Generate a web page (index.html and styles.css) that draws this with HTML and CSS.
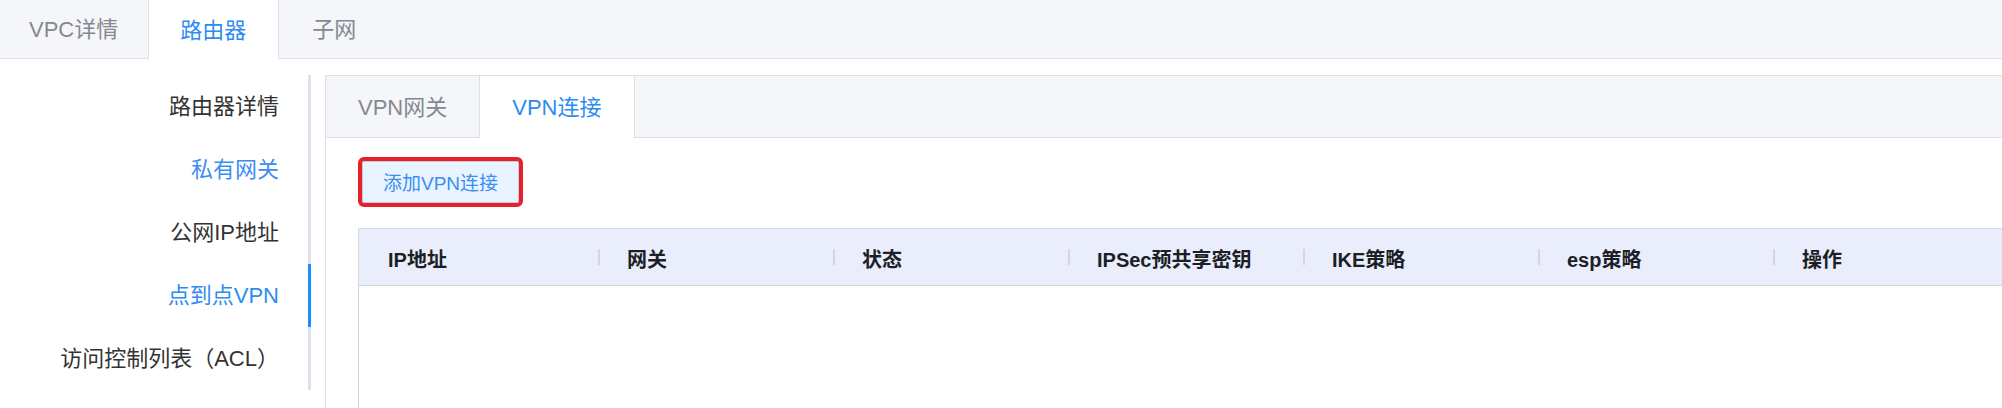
FILE: index.html
```html
<!DOCTYPE html>
<html lang="zh-CN">
<head>
<meta charset="utf-8">
<title>路由器</title>
<link rel="stylesheet" href="styles.css">
</head>
<body>
<div class="top-tabs">
  <div class="top-tab">VPC详情</div>
  <div class="top-tab active">路由器</div>
  <div class="top-tab last">子网</div>
</div>
<div class="main">
  <ul class="side-menu">
    <li class="menu-item">路由器详情</li>
    <li class="menu-item hover">私有网关</li>
    <li class="menu-item">公网IP地址</li>
    <li class="menu-item active">点到点VPN</li>
    <li class="menu-item">访问控制列表（ACL）</li>
  </ul>
  <div class="panel">
    <div class="sub-tabs">
      <div class="sub-tab">VPN网关</div>
      <div class="sub-tab active">VPN连接</div>
    </div>
    <div class="panel-body">
      <button class="btn-add" type="button">添加VPN连接</button>
      <div class="table">
        <div class="thead">
          <div class="th">IP地址</div>
          <div class="th sep">网关</div>
          <div class="th sep">状态</div>
          <div class="th sep">IPSec预共享密钥</div>
          <div class="th sep">IKE策略</div>
          <div class="th sep">esp策略</div>
          <div class="th sep">操作</div>
        </div>
        <div class="tbody"></div>
      </div>
    </div>
  </div>
</div>
</body>
</html>
```

FILE: styles.css
```css
* { box-sizing: border-box; }
html, body {
  margin: 0;
  padding: 0;
  width: 2002px;
  height: 408px;
  overflow: hidden;
  background: #ffffff;
  font-family: "Liberation Sans", "Noto Sans CJK SC", sans-serif;
}

.top-tabs {
  display: flex;
  height: 59px;
  background: #f5f6fa;
  border-bottom: 1px solid #dfe1e8;
}
.top-tab {
  display: flex;
  align-items: center;
  padding: 0 30px 4px 29px;
  font-size: 22px;
  color: #85888f;
  border-right: 1px solid #dfe1e8;
}
.top-tab.active {
  background: #ffffff;
  color: #2d8cf0;
  height: 59px;
  margin-bottom: -1px;
  padding: 0 32px 4px 31px;
}
.top-tab.last {
  border-right: none;
  padding-left: 33px;
}

.main {
  display: flex;
  align-items: flex-start;
  padding-top: 16px;
}

.side-menu {
  list-style: none;
  margin: 0;
  padding: 0;
  width: 311px;
  flex: none;
}
.menu-item {
  height: 63px;
  display: flex;
  align-items: center;
  justify-content: flex-end;
  padding: 0 29px 5px 0;
  font-size: 22px;
  color: #333333;
  border-right: 3px solid #dde2ee;
}
.menu-item.hover { color: #3c8df0; }
.menu-item.active {
  color: #2d8cf0;
  border-right-color: #1a8cff;
}

.panel {
  flex: none;
  width: 1720px;
  height: 333px;
  overflow: hidden;
  margin-left: 14px;
  border: 1px solid #dcdfe6;
  border-bottom: none;
}

.sub-tabs {
  display: flex;
  height: 62px;
  background: #f5f6fa;
  border-bottom: 1px solid #dcdfe6;
}
.sub-tab {
  display: flex;
  align-items: center;
  padding: 0 32px 4px 32px;
  font-size: 22px;
  color: #85888f;
  border-right: 1px solid #dcdfe6;
}
.sub-tab.active {
  background: #ffffff;
  color: #2d8cf0;
  height: 62px;
}

.panel-body {
  padding: 23px 0 0 36px;
}

.btn-add {
  display: block;
  height: 42px;
  padding: 0 20px 2px 20px;
  font-family: "Liberation Sans", "Noto Sans CJK SC", sans-serif;
  font-size: 19px;
  color: #3a8ef0;
  background: #e8f4ff;
  border: 1px solid #c3cbd6;
  border-radius: 2px;
  outline: 4px solid #e8202a;
  outline-offset: 0;
}

.table {
  margin: 25px 0 0 -4px;
  width: 1651px;
  border: 1px solid #d3d7de;
  border-bottom: none;
}
.thead {
  display: grid;
  grid-template-columns: 239px repeat(6, 235px);
  height: 57px;
  background: #e9edfc;
  border-bottom: 1px solid #d3d7de;
}
.th {
  position: relative;
  display: flex;
  align-items: center;
  padding: 2px 0 0 29px;
  font-size: 20px;
  font-weight: bold;
  color: #1c1f24;
}
.th.sep::before {
  content: "";
  position: absolute;
  left: 0;
  top: 20px;
  width: 2px;
  height: 16px;
  background: #d3d6dc;
}
.tbody {
  height: 122px;
}
```
